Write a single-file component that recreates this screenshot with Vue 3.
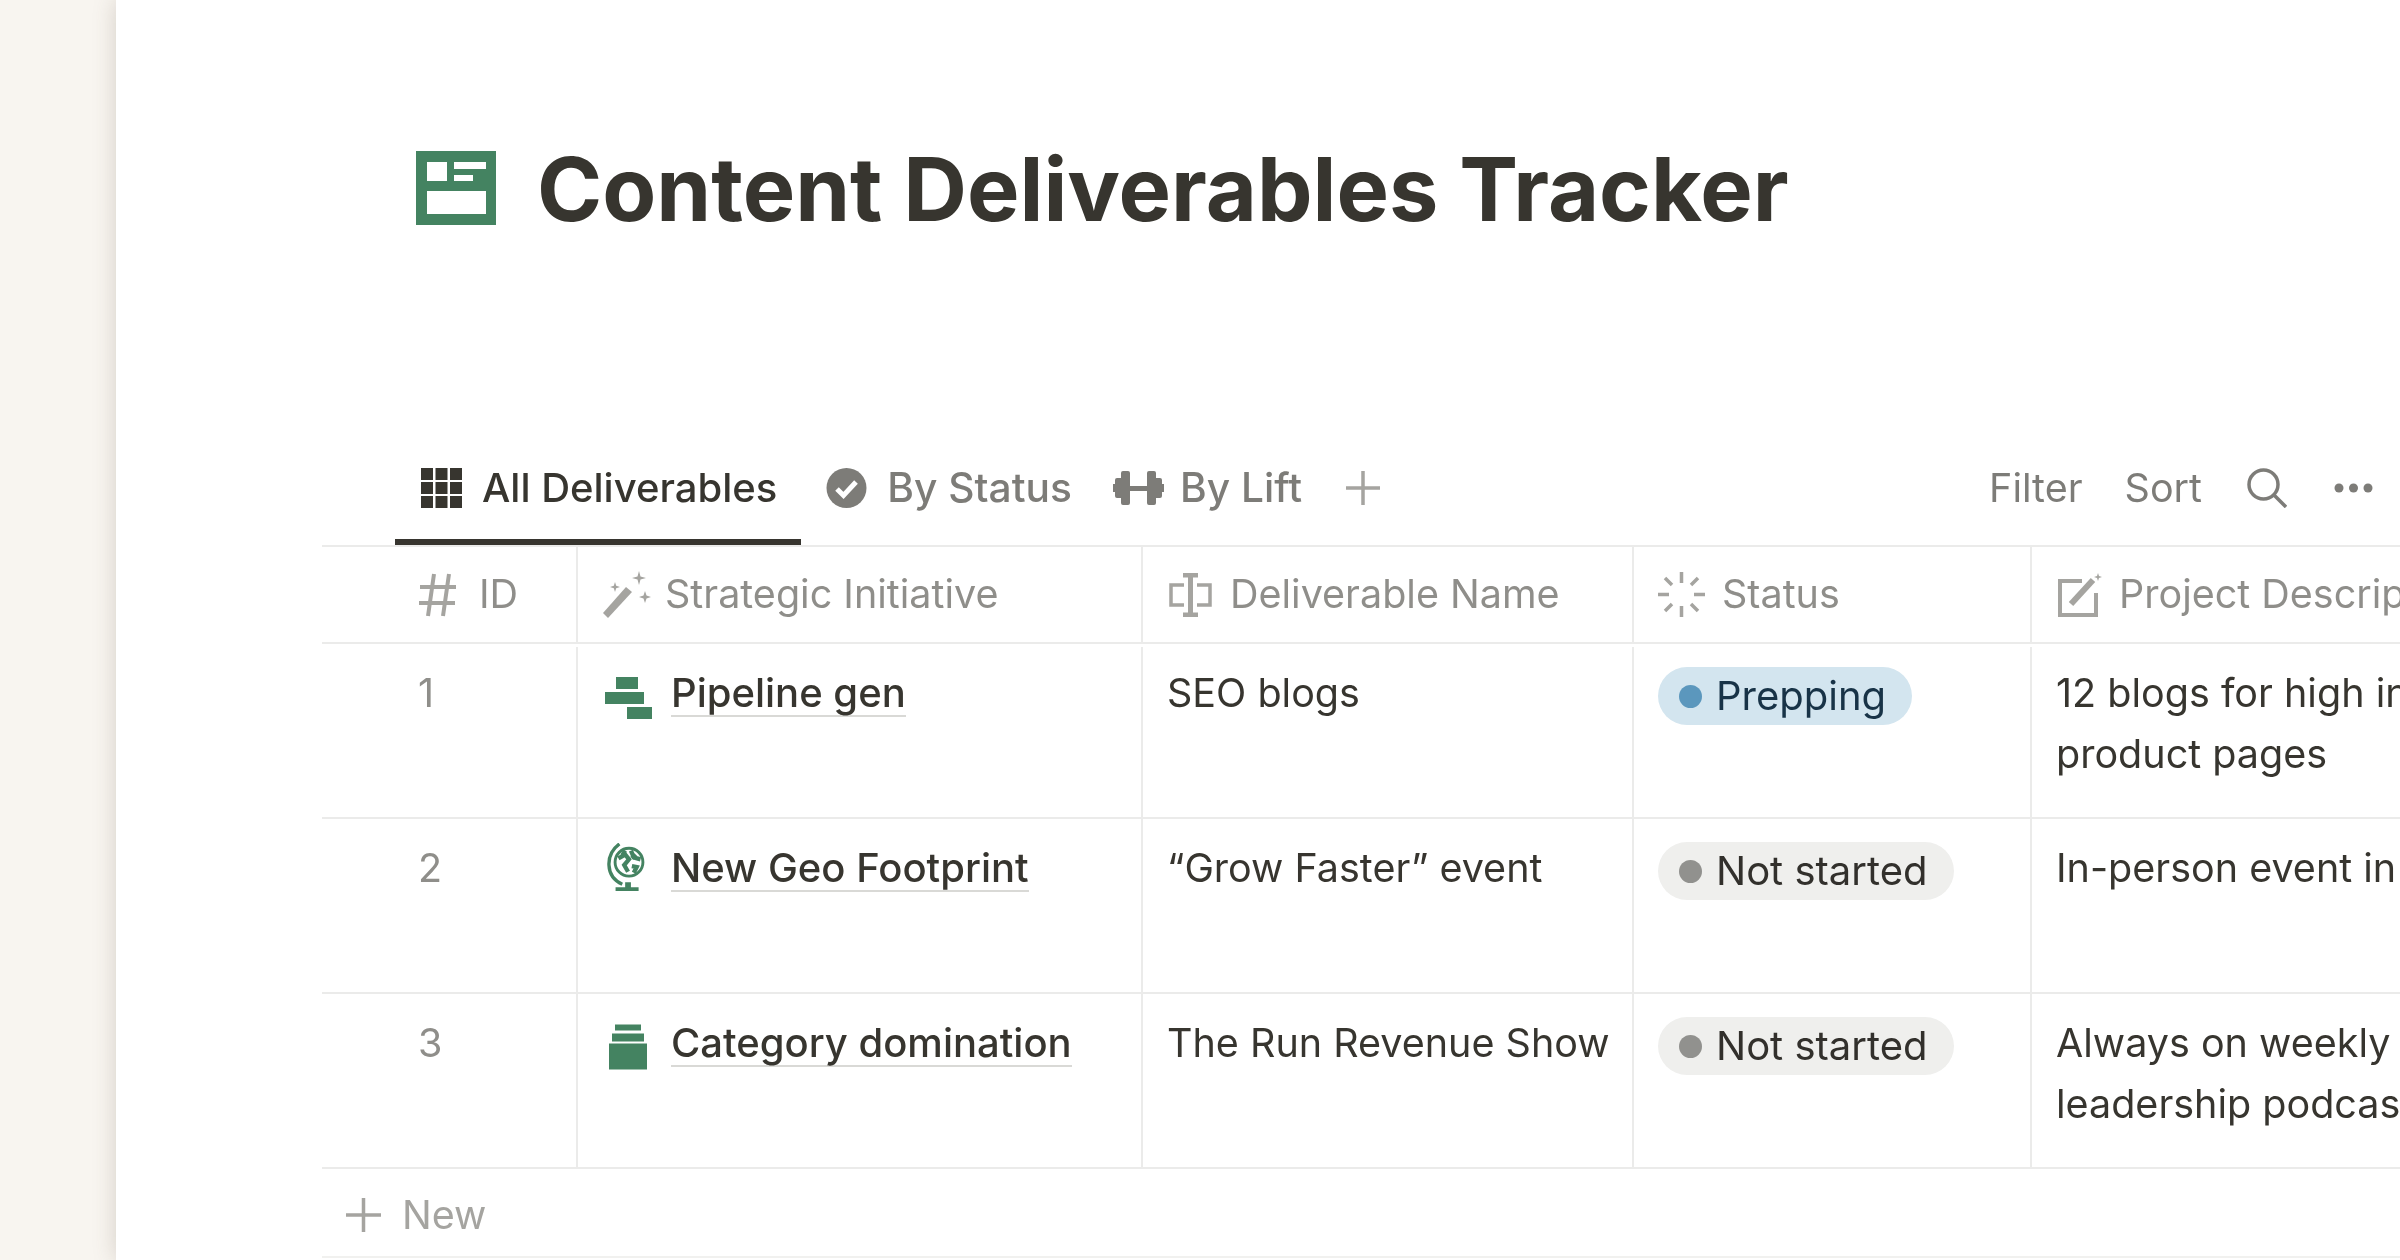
<template>
  <div class="page">
    <aside class="sidebar"></aside>
    <main class="main">
      <header class="title-row">
        <svg class="title-icon" viewBox="0 0 80 74">
          <path fill="#448361" fill-rule="evenodd" d="M0 0H80V74H0ZM11 11V30H31V11ZM38 11V18H70V11ZM38 24V30H57V24ZM11 40V63H70V40Z" />
        </svg>
        <h1>Content Deliverables Tracker</h1>
      </header>

      <nav class="tabs">
        <div class="tab active">
          <svg class="tab-icon" viewBox="0 0 41 40" fill="#37352f">
            <template v-for="y in [0, 14, 28]" :key="y">
              <rect v-for="x in [0, 14.5, 29]" :key="x" :x="x" :y="y" width="12" height="12" />
            </template>
          </svg>
          All Deliverables
        </div>
        <div class="tab">
          <svg class="tab-icon" viewBox="0 0 40 40">
            <circle cx="20" cy="20" r="20" fill="#7d7c78" />
            <path d="M10.5 21l6.5 6.5L29.500 14" fill="none" stroke="#fff" stroke-width="5" />
          </svg>
          By Status
        </div>
        <div class="tab">
          <svg class="dumbbell" viewBox="0 0 51 34" fill="#7d7c78">
            <path d="M4 7h4V2q0-2 2-2h5q2 0 2 2v13h17V2q0-2 2-2h5q2 0 2 2v5h4q2 0 2 2v4h2v8h-2v4q0 2-2 2h-4v5q0 2-2 2h-5q-2 0-2-2V20H17v12q0 2-2 2h-5q-2 0-2-2v-5H4q-2 0-2-2v-4H0v-8h2V9q0-2 2-2z" />
          </svg>
          By Lift
        </div>
        <svg class="add-view" viewBox="0 0 34 34"><path d="M17 0V34M0 17H34" stroke="#a5a4a0" stroke-width="3.500" /></svg>

        <div class="tools">
          <span>Filter</span>
          <span>Sort</span>
          <svg class="search" viewBox="0 0 40 40" fill="none" stroke="#7d7c78" stroke-width="3.500">
            <circle cx="16.500" cy="16.500" r="14.500" />
            <path d="M27 27L39 39" />
          </svg>
          <svg class="dots" viewBox="0 0 39 10" fill="#7d7c78">
            <circle cx="5" cy="5" r="4.500" />
            <circle cx="19.500" cy="5" r="4.500" />
            <circle cx="34" cy="5" r="4.500" />
          </svg>
        </div>
      </nav>

      <div class="table">
        <div class="row head">
          <div class="cell id-head">
            <svg class="head-icon hash" viewBox="0 0 38 44" fill="none" stroke="#a5a4a0" stroke-width="4">
              <path d="M15 1L9 43M30 1L24 43M1 14H37M0 30H36" />
            </svg>
            ID
          </div>
          <div class="cell initiative-head">
            <svg class="head-icon wand" viewBox="0 0 49 47" fill="#a5a4a0">
              <path d="M0 42L23 16L29 21L5 47Z" />
              <path d="M36 0l1.500 5.500L43 7l-5.500 1.500L36 14l-1.500-5.500L29 7l5.500-1.500zM12 11l1.200 3.800L17 16l-3.800 1.200L12 21l-1.200-3.800L7 16l3.800-1.200zM42 20l1.500 4.500L48 26l-4.500 1.500L42 32l-1.500-4.500L36 26l4.500-1.500z" />
            </svg>
            Strategic Initiative
          </div>
          <div class="cell name-head">
            <svg class="head-icon cursor" viewBox="0 0 43 44" fill="none" stroke="#a5a4a0" stroke-width="3.500">
              <path d="M15 12H2V32H15M28 12H41V32H28" />
              <path d="M14 2H29M14 42H29M21.500 2V42" stroke-width="5" />
            </svg>
            Deliverable Name
          </div>
          <div class="cell status-head">
            <svg class="head-icon spinner" viewBox="0 0 47 45" fill="none" stroke="#a5a4a0" stroke-width="3.500">
              <path d="M23.500 0V11M23.500 34V45M0 22.500H11M36 22.500H47M7 6L14 13M33 32L40 39M40 6L33 13M14 32L7 39" />
            </svg>
            Status
          </div>
          <div class="cell desc-head">
            <svg class="head-icon edit" viewBox="0 0 44 44" fill="none" stroke="#a5a4a0" stroke-width="4">
              <path d="M24 8H2V42H38V20" />
              <path d="M13 31L35 7" stroke-width="6" />
              <path d="M40 0l1 3 3 1-3 1-1 3-1-3-3-1 3-1z" fill="#a5a4a0" stroke="none" />
            </svg>
            Project Description
          </div>
        </div>

        <div v-for="item in items" :key="item.id" class="row body">
          <div class="cell id-cell">{{ item.id }}</div>
          <div class="cell initiative-cell">
            <svg v-if="item.icon === 'pipeline'" class="rel-icon pipeline" viewBox="0 0 48 42" fill="#448361">
              <rect x="11" y="0" width="22" height="12" />
              <rect x="0" y="15" width="39" height="12" />
              <rect x="22" y="30" width="25" height="12" />
            </svg>
            <svg v-else-if="item.icon === 'globe'" class="rel-icon globe" viewBox="0 0 48 50">
              <g fill="none" stroke="#448361">
                <path d="M14 1C-1 12 -1 35 17 43" stroke-width="3.500" />
                <circle cx="24" cy="20" r="14.500" stroke-width="3" />
                <path d="M13 16l7-4 4 5-5 6 4 7M26 8l3 7 7 2M27 24l5 1-3 6M20 8l-3 5M31 12l-4 4" stroke-width="4.500" />
              </g>
              <path d="M20 41h6v5h8v4H10v-4h10z" fill="#448361" />
            </svg>
            <svg v-else class="rel-icon stack" viewBox="0 0 48 45" fill="#448361">
              <rect x="10" y="0" width="26" height="6" />
              <rect x="7" y="9" width="32" height="8" />
              <rect x="4" y="19" width="38" height="26" />
            </svg>
            <span class="rel-link">{{ item.initiative }}</span>
          </div>
          <div class="cell">{{ item.name }}</div>
          <div class="cell status-cell">
            <span class="pill" :class="item.statusClass"><i class="dot"></i>{{ item.status }}</span>
          </div>
          <div class="cell desc-cell">{{ item.desc }}</div>
        </div>
      </div>

      <div class="new-row">
        <svg class="new-plus" viewBox="0 0 35 34"><path d="M17.500 0V34M0 17H35" stroke="#a5a4a0" stroke-width="3.500" /></svg>
        New
      </div>
    </main>
  </div>
</template>

<script setup>
const items = [
  {
    id: 1,
    icon: 'pipeline',
    initiative: 'Pipeline gen',
    name: 'SEO blogs',
    status: 'Prepping',
    statusClass: 'blue',
    desc: '12 blogs for high intent product pages'
  },
  {
    id: 2,
    icon: 'globe',
    initiative: 'New Geo Footprint',
    name: '“Grow Faster” event',
    status: 'Not started',
    statusClass: 'gray',
    desc: 'In-person event in Austin'
  },
  {
    id: 3,
    icon: 'stack',
    initiative: 'Category domination',
    name: 'The Run Revenue Show',
    status: 'Not started',
    statusClass: 'gray',
    desc: 'Always on weekly thought leadership podcast'
  }
]
</script>

<style>
html,
body {
  margin: 0;
  background: #fff;
}
</style>

<style scoped>
.page {
  display: flex;
  width: 2400px;
  height: 1260px;
  overflow: hidden;
  background: #f8f5f0;
  font-family: Inter, "Liberation Sans", sans-serif;
  color: #37352f;
  filter: blur(0.6px);
}
.sidebar {
  flex: 0 0 116px;
}
.main {
  flex: 1;
  min-width: 0;
  padding-left: 206px;
  background: #fff;
  box-shadow: 0 0 22px rgba(90, 75, 55, 0.22);
  overflow: hidden;
}
.title-row {
  display: flex;
  align-items: center;
  gap: 41px;
  height: 378px;
  padding-left: 94px;
}
.title-icon {
  width: 80px;
  height: 74px;
  margin-top: -2px;
}
h1 {
  margin: 0;
  font-size: 88.2px;
  line-height: 1;
  font-weight: 700;
  white-space: nowrap;
}
.tabs {
  display: flex;
  align-items: stretch;
  box-sizing: border-box;
  height: 117px;
  margin-top: 52px;
  padding: 0 27px 0 73px;
  border-bottom: 2px solid #ebebea;
  font-size: 40.7px;
  font-weight: 500;
  color: #7d7c78;
}
.tab {
  display: flex;
  align-items: center;
  gap: 20px;
  box-sizing: border-box;
  padding: 6px 21px 0 25px;
  border-bottom: 6px solid transparent;
  white-space: nowrap;
}
.tab.active {
  padding: 6px 24px 0 26px;
  font-size: 40px;
  color: #37352f;
  border-bottom-color: #37352f;
}
.tab-icon {
  width: 41px;
  height: 40px;
}
.dumbbell {
  width: 51px;
  height: 34px;
  margin: 0 -4px 0 -5px;
}
.add-view {
  width: 34px;
  height: 34px;
  align-self: center;
  margin-left: 23px;
}
.tools {
  display: flex;
  align-items: center;
  gap: 42px;
  margin-left: auto;
  font-size: 39.5px;
  font-weight: 400;
}
.search {
  width: 40px;
  height: 40px;
  margin-left: 3px;
}
.dots {
  width: 39px;
  height: 10px;
  margin-left: 5px;
}
.table {
  width: max-content;
}
.row {
  display: grid;
  grid-template-columns: 254px 565px 491px 398px 680px;
  border-bottom: 2px solid #ebebea;
  font-size: 39.5px;
}
.head {
  height: 97px;
  box-sizing: border-box;
  color: #8f8e8a;
}
.body {
  height: 175px;
  box-sizing: border-box;
}
.cell {
  box-sizing: border-box;
  padding: 19px 16px 0 24px;
  line-height: 61px;
  border-left: 2px solid #ebebea;
}
.cell:first-child {
  border-left: 0;
}
.head + .row .cell {
  margin-top: 3px;
  padding-top: 16px;
}
.head .cell {
  display: flex;
  align-items: center;
  padding-top: 0;
  white-space: nowrap;
}
.id-head {
  padding-left: 97px;
  gap: 22px;
}
.initiative-head {
  padding-left: 25px;
  gap: 13px;
}
.name-head {
  padding-left: 26px;
  gap: 18px;
}
.status-head {
  gap: 17px;
}
.desc-head {
  padding-left: 26px;
  gap: 17px;
}
.head-icon {
  flex: none;
}
.hash {
  width: 38px;
  height: 44px;
}
.wand {
  width: 49px;
  height: 47px;
}
.cursor {
  width: 43px;
  height: 44px;
}
.spinner {
  width: 47px;
  height: 45px;
}
.edit {
  width: 44px;
  height: 44px;
}
.id-cell {
  padding-left: 96px;
  color: #8f8e8a;
}
.initiative-cell {
  display: flex;
  align-items: flex-start;
  gap: 18px;
  padding-left: 27px;
}
.rel-icon {
  flex: none;
  width: 48px;
  height: 48px;
}
.pipeline {
  margin-top: 11px;
}
.globe {
  margin-top: 5px;
}
.stack {
  margin-top: 10px;
}
.rel-link {
  white-space: nowrap;
  border-bottom: 2px solid #d9d9d6;
  font-size: 40px;
  font-weight: 500;
  line-height: 44px;
  margin-top: 8px;
}
.status-cell {
  padding-left: 24px;
}
.pill {
  display: inline-flex;
  align-items: center;
  gap: 14px;
  height: 58px;
  margin-top: 4px;
  padding: 0 26px 0 21px;
  border-radius: 29px;
  font-size: 40px;
  line-height: 58px;
  vertical-align: top;
}
.pill.blue {
  background: #d3e5ef;
  color: #183347;
}
.pill.gray {
  background: #efefed;
  color: #32302c;
}
.dot {
  width: 23px;
  height: 23px;
  border-radius: 50%;
}
.blue .dot {
  background: #5b97bd;
}
.gray .dot {
  background: #91918e;
}
.desc-cell {
  padding-left: 24px;
  padding-right: 100px;
}
.new-row {
  display: flex;
  align-items: center;
  gap: 21px;
  box-sizing: border-box;
  height: 89px;
  padding: 4px 0 0 24px;
  border-bottom: 2px solid #f1f1ef;
  font-size: 39.5px;
  color: #a5a4a0;
}
.new-plus {
  width: 35px;
  height: 34px;
}
</style>
